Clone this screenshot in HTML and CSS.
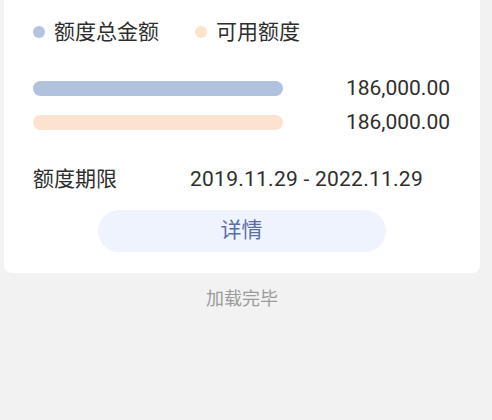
FILE: index.html
```html
<!DOCTYPE html>
<html lang="zh-CN">
<head>
<meta charset="utf-8">
<link rel="stylesheet" href="styles.css">
</head>
<body>
<div class="page">
  <div class="card">
    <div class="legend">
      <div class="legend-item"><span class="dot dot-blue"></span><span>额度总金额</span></div>
      <div class="legend-item"><span class="dot dot-orange"></span><span>可用额度</span></div>
    </div>
    <div class="bars">
      <div class="bar-row">
        <div class="bar bar-blue"></div>
        <div class="amount">186,000.00</div>
      </div>
      <div class="bar-row">
        <div class="bar bar-orange"></div>
        <div class="amount">186,000.00</div>
      </div>
    </div>
    <div class="period">
      <span class="period-label">额度期限</span>
      <span class="period-value">2019.11.29 - 2022.11.29</span>
    </div>
    <div class="btn-wrap">
      <div class="btn">详情</div>
    </div>
  </div>
  <div class="footer">加载完毕</div>
</div>
</body>
</html>
```
FILE: styles.css
```css
html, body {
  margin: 0;
  padding: 0;
  background: #f2f2f2;
}
body {
  width: 492px;
  height: 420px;
  font-family: Roboto, "Noto Sans CJK SC", sans-serif;
  color: #2e2e2e;
}
.page {
  padding: 0 12px 0 4px;
}
.card {
  background: #ffffff;
  border-radius: 0 0 8px 8px;
  padding: 18px 30px 21px 29px;
}
.legend {
  display: flex;
  align-items: center;
  gap: 36px;
  height: 28px;
  font-size: 21px;
  line-height: 28px;
}
.legend-item {
  display: flex;
  align-items: center;
  gap: 9px;
}
.dot {
  width: 12px;
  height: 12px;
  border-radius: 50%;
  display: inline-block;
}
.dot-blue { background: #b3c4de; }
.dot-orange { background: #fde2ce; }
.bars {
  margin-top: 27px;
  display: flex;
  flex-direction: column;
  gap: 4px;
}
.bar-row {
  display: flex;
  align-items: center;
  justify-content: space-between;
  height: 30px;
}
.bar {
  width: 250px;
  height: 15px;
  border-radius: 8px;
}
.bar-blue { background: #b0c2de; }
.bar-orange { background: #fde3cf; }
.amount {
  font-size: 21px;
  line-height: 30px;
}
.period {
  margin-top: 27px;
  display: flex;
  align-items: center;
  height: 30px;
  font-size: 21px;
  line-height: 30px;
}
.period-label {
  width: 157px;
}
.period-value {
  letter-spacing: 0.25px;
}
.btn-wrap {
  margin-top: 16px;
  display: flex;
  justify-content: center;
}
.btn {
  width: 288px;
  height: 42px;
  border-radius: 21px;
  background: #eef3fd;
  color: #5b6ea9;
  font-size: 21px;
  line-height: 40px;
  text-align: center;
}
.footer {
  margin-top: 14px;
  text-align: center;
  font-size: 18px;
  line-height: 24px;
  color: #9b9b9b;
}
```
